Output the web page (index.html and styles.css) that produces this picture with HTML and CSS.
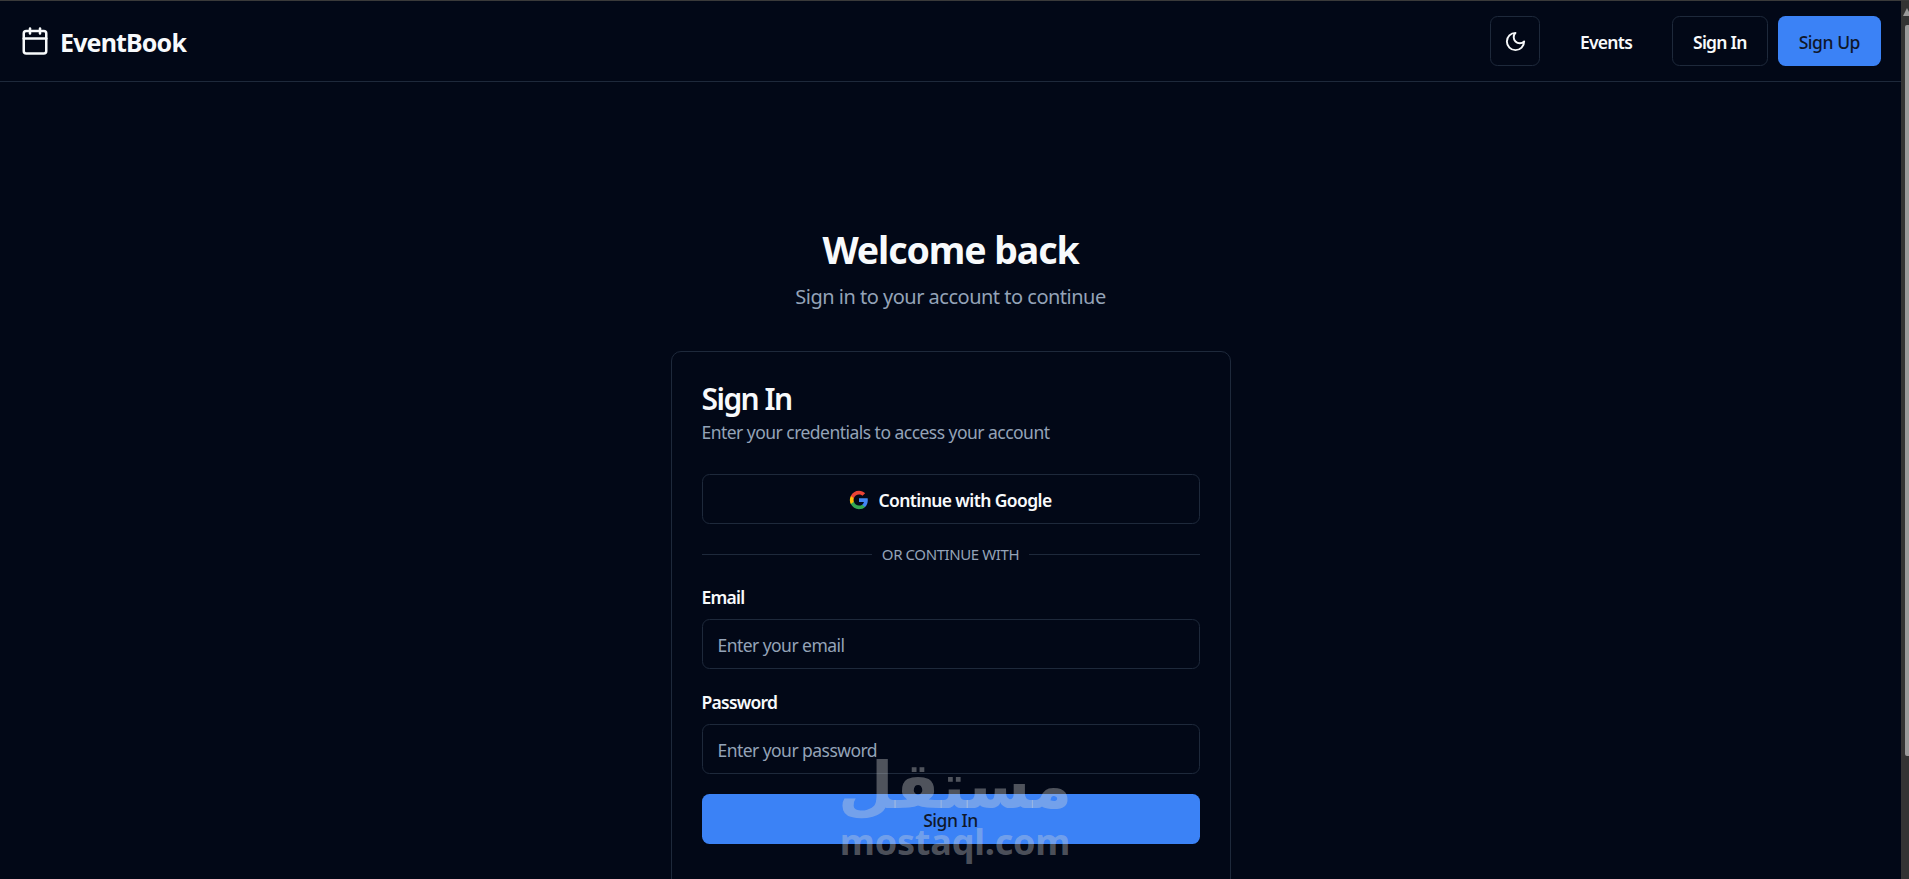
FILE: index.html
```html
<!DOCTYPE html>
<html lang="en">
<head>
<meta charset="utf-8">
<title>EventBook</title>
<link rel="stylesheet" href="styles.css">
</head>
<body>
<div class="window">
  <div class="page">
    <header class="topbar">
      <a class="brand">
        <svg class="brand-icon" viewBox="0 0 24 24" fill="none" stroke="currentColor" stroke-width="2" stroke-linecap="round" stroke-linejoin="round"><path d="M8 2v4"/><path d="M16 2v4"/><rect x="3" y="4" width="18" height="18" rx="2"/><path d="M3 10h18"/></svg>
        <span class="brand-name">EventBook</span>
      </a>
      <nav class="nav">
        <button class="btn btn-outline btn-icon"><svg class="icon-moon" viewBox="0 0 24 24" fill="none" stroke="currentColor" stroke-width="2" stroke-linecap="round" stroke-linejoin="round"><path d="M12 3a6 6 0 0 0 9 9 9 9 0 1 1-9-9Z"/></svg></button>
        <button class="btn btn-ghost">Events</button>
        <div class="auth">
          <button class="btn btn-outline">Sign In</button>
          <button class="btn btn-primary">Sign Up</button>
        </div>
      </nav>
    </header>
    <main class="main">
      <div class="intro">
        <h1 class="title">Welcome back</h1>
        <p class="subtitle">Sign in to your account to continue</p>
      </div>
      <section class="card">
        <h2 class="card-title">Sign In</h2>
        <p class="card-desc">Enter your credentials to access your account</p>
        <button class="btn btn-outline btn-wide btn-google">
          <svg class="icon" viewBox="0 0 24 24"><path fill="#4285F4" d="M22.56 12.25c0-.78-.07-1.53-.2-2.25H12v4.26h5.92c-.26 1.37-1.04 2.53-2.21 3.31v2.77h3.57c2.08-1.92 3.28-4.74 3.28-8.09z"/><path fill="#34A853" d="M12 23c2.97 0 5.46-.98 7.28-2.66l-3.57-2.77c-.98.66-2.23 1.06-3.71 1.06-2.86 0-5.29-1.93-6.16-4.53H2.18v2.84C3.99 20.53 7.7 23 12 23z"/><path fill="#FBBC05" d="M5.84 14.09c-.22-.66-.35-1.36-.35-2.09s.13-1.43.35-2.09V7.07H2.18C1.43 8.55 1 10.22 1 12s.43 3.45 1.18 4.93l2.85-2.22.81-.62z"/><path fill="#EA4335" d="M12 5.38c1.62 0 3.06.56 4.21 1.64l3.15-3.15C17.45 2.09 14.97 1 12 1 7.7 1 3.99 3.47 2.18 7.07l3.66 2.84c.87-2.6 3.3-4.53 6.16-4.53z"/></svg>
          Continue with Google
        </button>
        <div class="divider"><span class="divider-label">OR CONTINUE WITH</span></div>
        <form class="form">
          <div class="fields">
            <div class="field">
              <label class="label" for="email">Email</label>
              <input class="input" id="email" type="email" placeholder="Enter your email">
            </div>
            <div class="field">
              <label class="label" for="password">Password</label>
              <input class="input" id="password" type="password" placeholder="Enter your password">
            </div>
          </div>
          <button class="btn btn-primary btn-wide" type="button">Sign In</button>
        </form>
      </section>
    </main>
  </div>
  <div class="scrollbar"><div class="scroll-arrow"></div><div class="scroll-thumb"></div></div>
</div>
<div class="watermark"><span class="wm-ar">مستقل</span><span class="wm-en">mostaql.com</span></div>
</body>
</html>
```
FILE: styles.css
```css
* { box-sizing: border-box; }
html, body { margin: 0; height: 100%; overflow: hidden; }
body { background: #020817; color: #f8fafc; font-family: "Noto Sans", "Open Sans", sans-serif; border-top: 1px solid #3a3a3a; }
.window { display: flex; height: 878px; }
.page { flex: 1; min-width: 0; overflow: hidden; }
.topbar { display: flex; justify-content: space-between; align-items: center; height: 81px; padding: 0 20px; border-bottom: 1px solid #1e293b; }
.brand { display: flex; align-items: center; gap: 10px; }
.brand-icon { width: 30px; height: 30px; display: block; }
.brand-name { font-size: 25px; font-weight: 700; letter-spacing: -0.85px; padding-top: 2px; }
.nav { display: flex; align-items: center; gap: 20px; }
.auth { display: flex; gap: 10px; }
.icon { width: 20px; height: 20px; flex: none; display: block; }
.icon-moon { width: 23px; height: 23px; flex: none; display: block; }
.btn { display: inline-flex; align-items: center; justify-content: center; gap: 10px; height: 50px; padding: 2px 20px 0; border-radius: 7.5px; border: 1px solid transparent; background: transparent; color: #f8fafc; font: 600 17.5px "Noto Sans", "Open Sans", sans-serif; letter-spacing: -0.75px; white-space: nowrap; }
.btn-outline { border-color: #1e293b; }
.btn-ghost { border: 0; }
.btn-icon { width: 50px; padding: 0; }
.btn-primary { background: #3b82f6; color: #0f172a; font-weight: 500; letter-spacing: -0.45px; }
.btn-google { letter-spacing: -0.6px; gap: 9px; }
.btn-wide { width: 100%; }
.main { display: flex; flex-direction: column; align-items: center; padding-top: 145px; }
.intro { text-align: center; margin-bottom: 39px; }
.title { margin: 0 0 10px; font-size: 37.5px; line-height: 45px; font-weight: 700; letter-spacing: -1.1px; }
.subtitle { margin: 0; font-size: 20px; line-height: 30px; color: #94a3b8; letter-spacing: -0.5px; }
.card { width: 560px; padding: 30px 30px 60px; border: 1px solid #1e293b; border-radius: 10px; }
.card-title { margin: 0; font-size: 30px; line-height: 34px; font-weight: 600; letter-spacing: -1.55px; }
.card-desc { margin: 3.5px 0 29px; font-size: 17.5px; line-height: 25px; color: #94a3b8; letter-spacing: -0.53px; }
.divider { display: flex; align-items: center; margin: 19.5px 0 21.5px; font-size: 15px; line-height: 22px; color: #94a3b8; }
.divider::before, .divider::after { content: ""; flex: 1; height: 1px; background: #1e293b; }
.divider-label { padding: 0 10px; letter-spacing: -0.4px; }
.fields { display: flex; flex-direction: column; gap: 22.5px; margin-bottom: 20px; }
.field { display: flex; flex-direction: column; gap: 11.5px; }
.label { font-size: 17.5px; line-height: 21px; font-weight: 600; letter-spacing: -0.75px; }
.input { width: 100%; height: 50px; padding: 2px 15px 0; border: 1px solid #1e293b; border-radius: 7.5px; background: transparent; color: #f8fafc; font: 400 17.5px "Noto Sans", "Open Sans", sans-serif; letter-spacing: -0.55px; }
.input::placeholder { color: #94a3b8; opacity: 1; }
.scrollbar { width: 8px; flex: none; display: flex; flex-direction: column; overflow: hidden; background: #333; }
.scroll-arrow { flex: none; width: 8px; height: 8px; margin: 7px 0 0 2px; border-left: 4px solid transparent; border-right: 4px solid transparent; border-bottom: 8px solid #9a9a9a; }
.scroll-thumb { flex: none; width: 4px; height: 731px; margin: 9px 0 0 4px; background: #9a9a9a; border-radius: 2px 0 0 2px; }
.watermark { position: absolute; left: 839px; top: 749px; width: 232px; display: flex; flex-direction: column; align-items: center; color: rgba(215, 215, 215, 0.36); pointer-events: none; }
.wm-ar { font: 700 64px/74px "DejaVu Sans", sans-serif; }
.wm-en { font: 700 36px/38px "Noto Sans", sans-serif; letter-spacing: -0.2px; }
```
